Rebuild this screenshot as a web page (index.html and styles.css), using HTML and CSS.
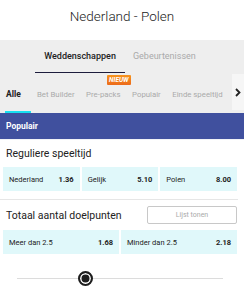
FILE: index.html
```html
<!DOCTYPE html>
<html>
<head>
    <title>Nederland - Polen</title>
    <link rel="stylesheet" href="styles.css">
</head>
<body>

<div class="match-header">Nederland - Polen</div>

<div class="main-tabs">
    <div class="main-tab active">Weddenschappen</div>
    <div class="main-tab">Gebeurtenissen</div>
</div>

<div class="sub-tabs">
    <div class="sub-tab active">Alle</div>
    <div class="sub-tab">Bet Builder</div>
    <div class="sub-tab">Pre-packs<span class="badge">NIEUW</span></div>
    <div class="sub-tab">Populair</div>
    <div class="sub-tab">Einde speeltijd</div>
    <div class="sub-arrow">
        <svg width="6" height="9" viewBox="0 0 6 9"><path d="M1 1 L4.5 4.5 L1 8" fill="none" stroke="#222" stroke-width="1.8"/></svg>
    </div>
</div>

<div class="section-bar">Populair</div>

<div class="market">
    <div class="market-title">Reguliere speeltijd</div>
    <div class="odds-row">
        <div class="odd"><span>Nederland</span><b>1.36</b></div>
        <div class="odd"><span>Gelijk</span><b>5.10</b></div>
        <div class="odd"><span>Polen</span><b>8.00</b></div>
    </div>
</div>

<div class="market bordered">
    <div class="market-head">
        <div class="market-title">Totaal aantal doelpunten</div>
        <button class="list-btn">Lijst tonen</button>
    </div>
    <div class="odds-row">
        <div class="odd"><span>Meer dan 2.5</span><b>1.68</b></div>
        <div class="odd"><span>Minder dan 2.5</span><b>2.18</b></div>
    </div>
</div>

<div class="slider">
    <div class="slider-track"></div>
    <div class="slider-knob" style="left: 33%;"></div>
</div>

</body>
</html>
```

FILE: styles.css
```css
* { margin: 0; padding: 0; box-sizing: border-box; }
body {
    font-family: Roboto, "Liberation Sans", Arial, sans-serif;
    width: 244px;
    background: #fff;
    color: #222;
}

.match-header {
    height: 40px;
    display: flex;
    align-items: center;
    justify-content: center;
    font-size: 13.5px;
    font-weight: 300;
    color: #222;
    padding-bottom: 9px;
}

/* top tabs */
.main-tabs {
    background: #eeeeee;
    height: 33px;
    display: flex;
    justify-content: center;
    padding-right: 5px;
}

.main-tab {
    font-size: 9px;
    color: #aaa;
    padding: 0 8px;
    display: flex;
    align-items: center;
    border-bottom: 1px solid transparent;
}

.main-tab.active {
    color: #222;
    font-weight: 500;
    padding: 0 9px;
    border-bottom: 1px solid #1c1c3c;
}

/* sub tabs */
.sub-tabs {
    background: #eeeeee;
    height: 40px;
    display: flex;
    align-items: stretch;
    padding-left: 5px;
    position: relative;
}

.sub-tab {
    font-size: 7.8px;
    color: #aaa;
    display: flex;
    align-items: center;
    margin-right: 11.5px;
    position: relative;
    white-space: nowrap;
    border-bottom: 2px solid transparent;
    padding-top: 4px;
}

.sub-tab.active {
    color: #222;
    font-size: 8.5px;
    font-weight: 700;
    width: 26px;
    border-bottom: 2px solid #18e0f0;
    padding: 4px 0 0 1px;
    margin-right: 6px;
}

.badge {
    position: absolute;
    top: 2px;
    left: 21px;
    background: linear-gradient(#f7941d, #ec6a1a);
    color: #fff;
    font-size: 6.5px;
    font-weight: 700;
    font-style: italic;
    padding: 1px 2px;
    border-radius: 1px;
}

.sub-arrow {
    position: absolute;
    right: 0;
    top: 1px;
    bottom: 3px;
    width: 12px;
    background: #f6f6f6;
    display: flex;
    align-items: center;
    justify-content: center;
}

.section-bar {
    background: #40509e;
    color: #fff;
    font-size: 8.5px;
    font-weight: 700;
    height: 27px;
    display: flex;
    align-items: center;
    padding-left: 6px;
    border-bottom: 1px solid #f0f2f6;
}

/* markets */
.market {
    padding: 0 7px 0 3px;
}

.market.bordered {
    border-top: 1px solid #e6e6e6;
    margin-right: 6px;
    padding-right: 1px;
    margin-top: 8px;
}

.market-title {
    font-size: 10.5px;
    color: #222;
    height: 27px;
    display: flex;
    align-items: center;
    padding-left: 3px;
}

.market-head {
    display: flex;
    justify-content: space-between;
    align-items: center;
    height: 30px;
}

.list-btn {
    width: 90px;
    height: 18px;
    background: #fff;
    border: 1px solid #c8c8c8;
    border-radius: 2px;
    font-family: inherit;
    font-size: 7px;
    color: #aaa;
}

.odds-row {
    display: flex;
    gap: 2px;
}

.odd {
    flex: 1;
    height: 24px;
    background: #e0f8fa;
    display: flex;
    align-items: center;
    justify-content: space-between;
    padding: 0 6px;
    font-size: 7.5px;
    color: #222;
}

.odd b {
    font-weight: 700;
}

/* slider */
.slider {
    position: relative;
    height: 44px;
    margin: 0 21px 0 17px;
}

.slider-track {
    position: absolute;
    left: 0;
    right: 0;
    top: 24px;
    height: 1px;
    background: #dcdcdc;
}

.slider-knob {
    position: absolute;
    top: 17px;
    width: 15px;
    height: 15px;
    margin-left: -7px;
    border-radius: 50%;
    background: #1e1e1e;
    border: 2px solid #1e1e1e;
    box-shadow: inset 0 0 0 1.5px #fff;
}
```
